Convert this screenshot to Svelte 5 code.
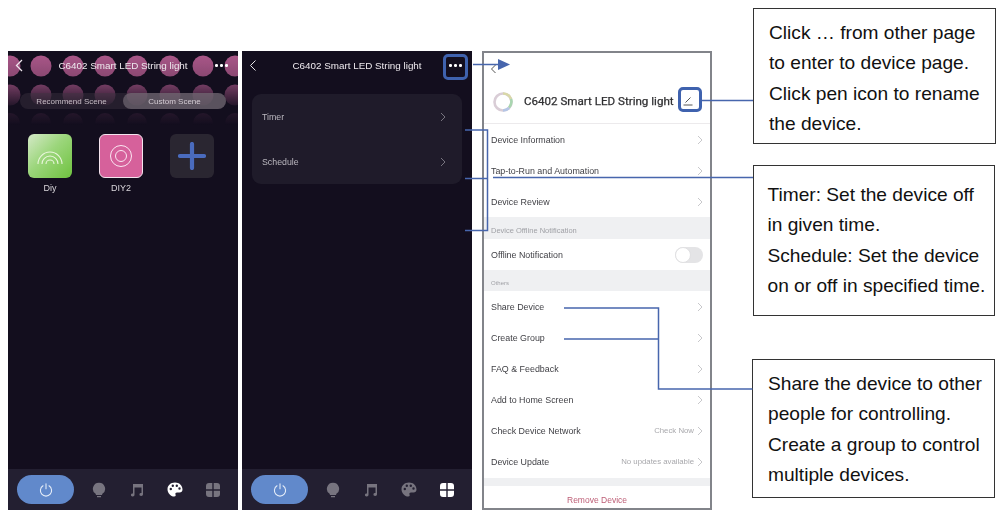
<script>
  const cols = [10, 41, 73, 105, 137, 170, 203, 235];
  const rows = [
    { y: 15, fill: 'url(#r1)', r: 10.5 },
    { y: 44, fill: 'url(#r2)', r: 10.5 },
    { y: 72, fill: 'url(#r3)', r: 10 }
  ];
  const settingsA = ['Device Information', 'Tap-to-Run and Automation', 'Device Review'];
  const settingsB = [
    { t: 'Share Device' },
    { t: 'Create Group' },
    { t: 'FAQ & Feedback' },
    { t: 'Add to Home Screen' },
    { t: 'Check Device Network', v: 'Check Now' },
    { t: 'Device Update', v: 'No updates available' }
  ];
  const notes = [
    { cls: 'n1', lines: ['Click … from other page', 'to enter to device page.', 'Click pen icon to rename', 'the device.'] },
    { cls: 'n2', lines: ['Timer: Set the device off', 'in given time.', 'Schedule: Set the device', 'on or off in specified time.'] },
    { cls: 'n3', lines: ['Share the device to other', 'people for controlling.', 'Create a group to control', 'multiple devices.'] }
  ];
</script>

{#snippet chev(cls)}
  <svg class={cls} width="6" height="10" viewBox="0 0 6 10"><path d="M1 1l4 4-4 4" fill="none" stroke="currentColor" stroke-width="1"/></svg>
{/snippet}

{#snippet footer(active)}
  <div class="foot">
    <div class="power">
      <svg width="14" height="14" viewBox="0 0 14 14"><path d="M4 2.8a5.6 5.6 0 1 0 6 0M7 .8v5" fill="none" stroke="#e4ecf8" stroke-width="1.1" stroke-linecap="round"/></svg>
    </div>
    <div class="fi">
      <svg width="14" height="16" viewBox="0 0 14 16"><path d="M7 .8a6 6 0 0 1 3.4 11l-.4 1.2H4l-.4-1.2A6 6 0 0 1 7 .8zM5 14h4v1.2H5z" fill="#77747f"/></svg>
    </div>
    <div class="fi">
      <svg width="14" height="14" viewBox="0 0 14 14"><path d="M3 1h10v10.5a1.8 1.5 0 1 1-1.5-1.5V4.5H4.500v7.500a1.800 1.500 0 1 1-1.500-1.500z" fill="#77747f"/></svg>
    </div>
    <div class="fi" class:on={active === 'palette'}>
      <svg width="16" height="15" viewBox="0 0 16 15"><path fill-rule="evenodd" d="M8 .5C3.700.5.500 3.400.500 7.200c0 3.900 3.200 7.300 6.700 7.300 1.500 0 1.700-1 1.300-2-.4-1.100.2-2 1.500-2h2.500c1.800 0 3-1.200 3-3C15.500 3.300 12.200.5 8 .5zM3.800 8.200a1.200 1.200 0 1 1 0-2.400 1.200 1.200 0 0 1 0 2.400zm2-3.300a1.200 1.200 0 1 1 0-2.400 1.200 1.200 0 0 1 0 2.400zm4 0a1.200 1.200 0 1 1 0-2.400 1.200 1.200 0 0 1 0 2.400zm2.700 2.800a1.200 1.200 0 1 1 0-2.400 1.200 1.200 0 0 1 0 2.400z" fill="currentColor"/></svg>
    </div>
    <div class="fi" class:on={active === 'grid'}>
      <svg width="14" height="14" viewBox="0 0 14 14" fill="currentColor"><path d="M3 0h3.300v6.300H0V3a3 3 0 0 1 3-3zM7.700 0H11a3 3 0 0 1 3 3v3.300H7.700zM0 7.700h6.300V14H3a3 3 0 0 1-3-3zM7.700 7.700H14V11a3 3 0 0 1-3 3H7.700z"/></svg>
    </div>
  </div>
{/snippet}

<div class="stage">
  <div class="phones">
    <section class="phone dark">
      <svg class="dots" width="230" height="90" viewBox="0 0 230 90">
        <defs>
          <linearGradient id="r1" x1="0" y1="0" x2="0" y2="1"><stop offset="0" stop-color="#c4649b" stop-opacity="0.85"/><stop offset="1" stop-color="#c4649b" stop-opacity="0.68"/></linearGradient>
          <linearGradient id="r2" x1="0" y1="0" x2="0" y2="1"><stop offset="0" stop-color="#c4649b" stop-opacity="0.55"/><stop offset="1" stop-color="#c4649b" stop-opacity="0.1"/></linearGradient>
          <linearGradient id="r3" x1="0" y1="0" x2="0" y2="1"><stop offset="0" stop-color="#c4649b" stop-opacity="0.1"/><stop offset="0.6" stop-color="#c4649b" stop-opacity="0"/></linearGradient>
        </defs>
        {#each rows as r}
          {#each cols as c}
            <circle cx={c - 8} cy={r.y} r={r.r} fill={r.fill} />
          {/each}
        {/each}
      </svg>
      <header class="top">
        <svg class="back" width="8" height="13" viewBox="0 0 8 13"><path d="M7 1L1.500 6.500 7 12" fill="none" stroke="#f0e6ee" stroke-width="1.300"/></svg>
        <span class="title">C6402 Smart LED String light</span>
        <span class="more"><i></i><i></i><i></i></span>
      </header>
      <div class="tabs">
        <span class="tab">Recommend Scene</span>
        <span class="tab act">Custom Scene</span>
      </div>
      <div class="tiles">
        <div class="tile">
          <div class="sq green">
            <svg width="28" height="18" viewBox="0 0 28 18" fill="none" stroke="#eaf6dc" stroke-width="1.100"><path d="M2 17a12 12 0 0 1 24 0M6 17a8 8 0 0 1 16 0M10 17a4 4 0 0 1 8 0"/></svg>
          </div>
          <span>Diy</span>
        </div>
        <div class="tile">
          <div class="sq pink">
            <svg width="24" height="24" viewBox="0 0 24 24" fill="none" stroke="#fbe6f2" stroke-width="1"><circle cx="12" cy="12" r="10.500"/><circle cx="12" cy="12" r="5.500"/></svg>
          </div>
          <span>DIY2</span>
        </div>
        <div class="tile">
          <div class="sq add">
            <svg width="28" height="28" viewBox="0 0 28 28"><path d="M14 2v24M2 14h24" stroke="#4a6bbd" stroke-width="4.200" stroke-linecap="round"/></svg>
          </div>
        </div>
      </div>
      {@render footer('palette')}
    </section>

    <section class="phone dark">
      <header class="top">
        <svg class="back" width="8" height="13" viewBox="0 0 8 13"><path d="M6.500 1.500L1.500 6.500l5 5" fill="none" stroke="#e8e6ea" stroke-width="1"/></svg>
        <span class="title">C6402 Smart LED String light</span>
        <span class="more"><i></i><i></i><i></i></span>
      </header>
      <div class="card">
        <div class="crow"><span>Timer</span>{@render chev('c1')}</div>
        <div class="crow"><span>Schedule</span>{@render chev('c1')}</div>
      </div>
      {@render footer('grid')}
    </section>

    <section class="phone light">
      <svg class="lback" width="7" height="10" viewBox="0 0 7 10"><path d="M5.500 1L1.500 5l4 4" fill="none" stroke="#555" stroke-width="1"/></svg>
      <div class="dev">
        <svg width="22" height="22" viewBox="0 0 22 22" fill="none" stroke-width="2.600">
          <circle cx="11" cy="11" r="8.500" stroke="#d9cdd6"/>
          <path d="M11 2.500a8.500 8.500 0 0 1 8 5.500" stroke="#d9d8a8"/>
          <path d="M19 8a8.500 8.500 0 0 1-2 8.500" stroke="#a9d6b0"/>
          <path d="M17 17a8.500 8.500 0 0 1-6 2.500" stroke="#b4c6e6"/>
        </svg>
        <strong>C6402 Smart LED String light</strong>
        <svg class="pen" width="10" height="10" viewBox="0 0 10 10" fill="none" stroke="#444" stroke-width="0.900"><path d="M2.500 6.500L7.500 1.500M0.500 9h9"/></svg>
      </div>
      {#each settingsA as t}
        <div class="row"><span>{t}</span>{@render chev('c2')}</div>
      {/each}
      <div class="sect s1">Device Offline Notification</div>
      <div class="row">
        <span>Offline Notification</span>
        <span class="toggle"><i></i></span>
      </div>
      <div class="sect s2">Others</div>
      {#each settingsB as s}
        <div class="row">
          <span>{s.t}</span>
          <span class="val">{#if s.v}<em>{s.v}</em>{/if}{@render chev('c2')}</span>
        </div>
      {/each}
      <div class="sect s3"></div>
      <div class="remove">Remove Device</div>
    </section>
  </div>

  {#each notes as n}
    <aside class="note {n.cls}">
      {#each n.lines as l}<div>{l}</div>{/each}
    </aside>
  {/each}

  <svg class="wires" width="1001" height="518" viewBox="0 0 1001 518" fill="none" stroke="#4766ad" stroke-width="1.500">
    <rect x="444.500" y="55.500" width="22" height="23" rx="3.500" stroke="#3f62ae" stroke-width="3"/>
    <rect x="679.500" y="88.500" width="21" height="22" rx="3.500" stroke="#3f62ae" stroke-width="3"/>
    <path d="M473 64.500h26"/>
    <path d="M498 59l12 5.500-12 5.500z" fill="#4766ad" stroke="none"/>
    <path d="M702 100.500h51"/>
    <path d="M465 130h22.500v100.500H465M465 178.500h22.500"/>
    <path d="M493 177.500h260"/>
    <path d="M564 308h94.500v81h94M564 339h94.500"/>
  </svg>
</div>

<style>
  :global(body) { margin: 0; background: #fff; }
  .stage {
    position: relative;
    width: 1001px;
    height: 518px;
    overflow: hidden;
    background: #fff;
    font-family: "Liberation Sans", Arial, sans-serif;
  }
  .phones {
    display: flex;
    align-items: flex-start;
    padding: 51px 0 0 8px;
  }
  .phone {
    position: relative;
    width: 230px;
    height: 459px;
    display: flex;
    flex-direction: column;
    flex: none;
    overflow: hidden;
    margin-right: 4px;
    box-sizing: border-box;
  }
  .dark { background: #130e1e; color: #e6e3e8; }
  .dots { position: absolute; left: 0; top: 0; filter: blur(0.5px); }
  .top {
    position: relative;
    height: 28px;
    display: flex;
    align-items: center;
    justify-content: center;
    flex: none;
  }
  .back { position: absolute; left: 7px; top: 8px; }
  .title { font-size: 9.850px; color: #eee9ee; filter: blur(0.3px); }
  .more { position: absolute; left: 207px; top: 13px; display: flex; gap: 2.500px; }
  .more i { width: 2.500px; height: 2.500px; border-radius: 50%; background: #fff; }
  .tabs {
    position: relative;
    display: flex;
    height: 16px;
    margin: 14px 12px 0 12px;
    border-radius: 8px;
    background: rgba(60, 50, 65, 0.45);
    flex: none;
  }
  .tab {
    flex: 1;
    display: flex;
    align-items: center;
    justify-content: center;
    font-size: 8px;
    color: #c5bcc4;
    border-radius: 8px;
    filter: blur(0.3px);
  }
  .tab.act { background: rgba(135, 125, 135, 0.55); color: #d4ccd4; }
  .tiles {
    position: relative;
    display: flex;
    gap: 27px;
    margin: 25px 0 0 20px;
    flex: 1;
  }
  .tile {
    width: 44px;
    display: flex;
    flex-direction: column;
    align-items: center;
    gap: 5px;
    font-size: 9px;
    color: #d8d5da;
    filter: blur(0.25px);
  }
  .sq {
    width: 44px;
    height: 44px;
    box-sizing: border-box;
    border-radius: 6px;
    display: flex;
    align-items: center;
    justify-content: center;
  }
  .green { background: linear-gradient(135deg, #d5e9c8 0%, #9cd67c 45%, #6fc23f 100%); }
  .pink { background: #d6619b; border: 1px solid #f4e4ee; }
  .add { background: #2a2631; }
  .foot {
    position: absolute;
    left: 0;
    right: 0;
    bottom: 0;
    height: 41px;
    background: #231f31;
    display: flex;
    align-items: center;
    padding-left: 9px;
    filter: blur(0.35px);
  }
  .power {
    width: 57px;
    height: 29px;
    margin-right: 6px;
    border-radius: 15px;
    background: #6189cb;
    display: flex;
    align-items: center;
    justify-content: center;
  }
  .fi {
    width: 38px;
    display: flex;
    justify-content: center;
    color: #77747f;
  }
  .fi.on { color: #fff; }
  .card {
    margin: 15px 10px 0 10px;
    height: 90px;
    border-radius: 9px;
    background: #1f1b2a;
    display: flex;
    flex-direction: column;
    flex: none;
  }
  .crow {
    height: 45px;
    display: flex;
    align-items: center;
    justify-content: space-between;
    padding: 0 16px 0 10px;
    font-size: 8.800px;
    color: #bcb9c0;
    filter: blur(0.25px);
  }
  .c1 { color: #77747f; }
  .light {
    width: 230px;
    margin-left: 6px;
    margin-right: 0;
    background: #fff;
    border: 2px solid #82848a;
    color: #3c3c40;
  }
  .lback { position: absolute; left: 6px; top: 11px; }
  .dev {
    height: 71px;
    flex: none;
    box-sizing: border-box;
    padding: 38px 0 0 8px;
    display: flex;
    align-items: flex-start;
    position: relative;
    border-bottom: 1px solid #eceaec;
  }
  .dev strong {
    margin: 3px 0 0 10px;
    font-size: 11.600px;
    font-weight: 400;
    font-family: Roboto, "Liberation Sans", sans-serif;
    -webkit-text-stroke: 0.25px #333;
    color: #2e2e32;
    white-space: nowrap;
    filter: blur(0.2px);
  }
  .pen { position: absolute; left: 199px; top: 43px; }
  .row {
    height: 31px;
    flex: none;
    display: flex;
    align-items: center;
    justify-content: space-between;
    padding: 0 7px 0 7px;
    font-size: 8.900px;
    color: #3f3f44;
    filter: blur(0.25px);
  }
  .val { display: flex; align-items: center; gap: 3px; }
  .val em { font-style: normal; font-size: 7.800px; color: #a8a8ac; }
  .c2 { color: #c8c8cb; }
  .sect {
    flex: none;
    background: #eff0f2;
    font-size: 7.500px;
    color: #a0a1a6;
    padding-left: 7px;
    box-sizing: border-box;
    filter: blur(0.25px);
  }
  .s1 { height: 22px; padding-top: 9px; }
  .s2 { height: 21px; padding-top: 9.500px; font-size: 6px; }
  .s3 { height: 8px; margin-top: 1px; }
  .toggle {
    position: relative;
    width: 28px;
    height: 16px;
    border-radius: 8px;
    background: #e4e4e6;
    display: block;
  }
  .toggle i {
    position: absolute;
    left: 0;
    top: 0;
    width: 16px;
    height: 16px;
    box-sizing: border-box;
    border-radius: 50%;
    background: #fff;
    border: 1px solid #e0e0e2;
  }
  .remove {
    text-align: center;
    font-size: 8.500px;
    color: #bd5e76;
    padding-top: 9px;
    filter: blur(0.25px);
  }
  .note {
    position: absolute;
    box-sizing: border-box;
    background: #fff;
    border: 1px solid #333;
    font-size: 19.150px;
    line-height: 30.400px;
    color: #111;
    white-space: nowrap;
  }
  .n1 { left: 753px; top: 8px; width: 243px; height: 136px; padding: 9px 0 0 15px; }
  .n2 { left: 753px; top: 165px; width: 242px; height: 151px; padding: 14px 0 0 13.500px; }
  .n3 { left: 752px; top: 359px; width: 243px; height: 139px; padding: 9px 0 0 15px; }
  .wires { position: absolute; left: 0; top: 0; pointer-events: none; }
</style>
